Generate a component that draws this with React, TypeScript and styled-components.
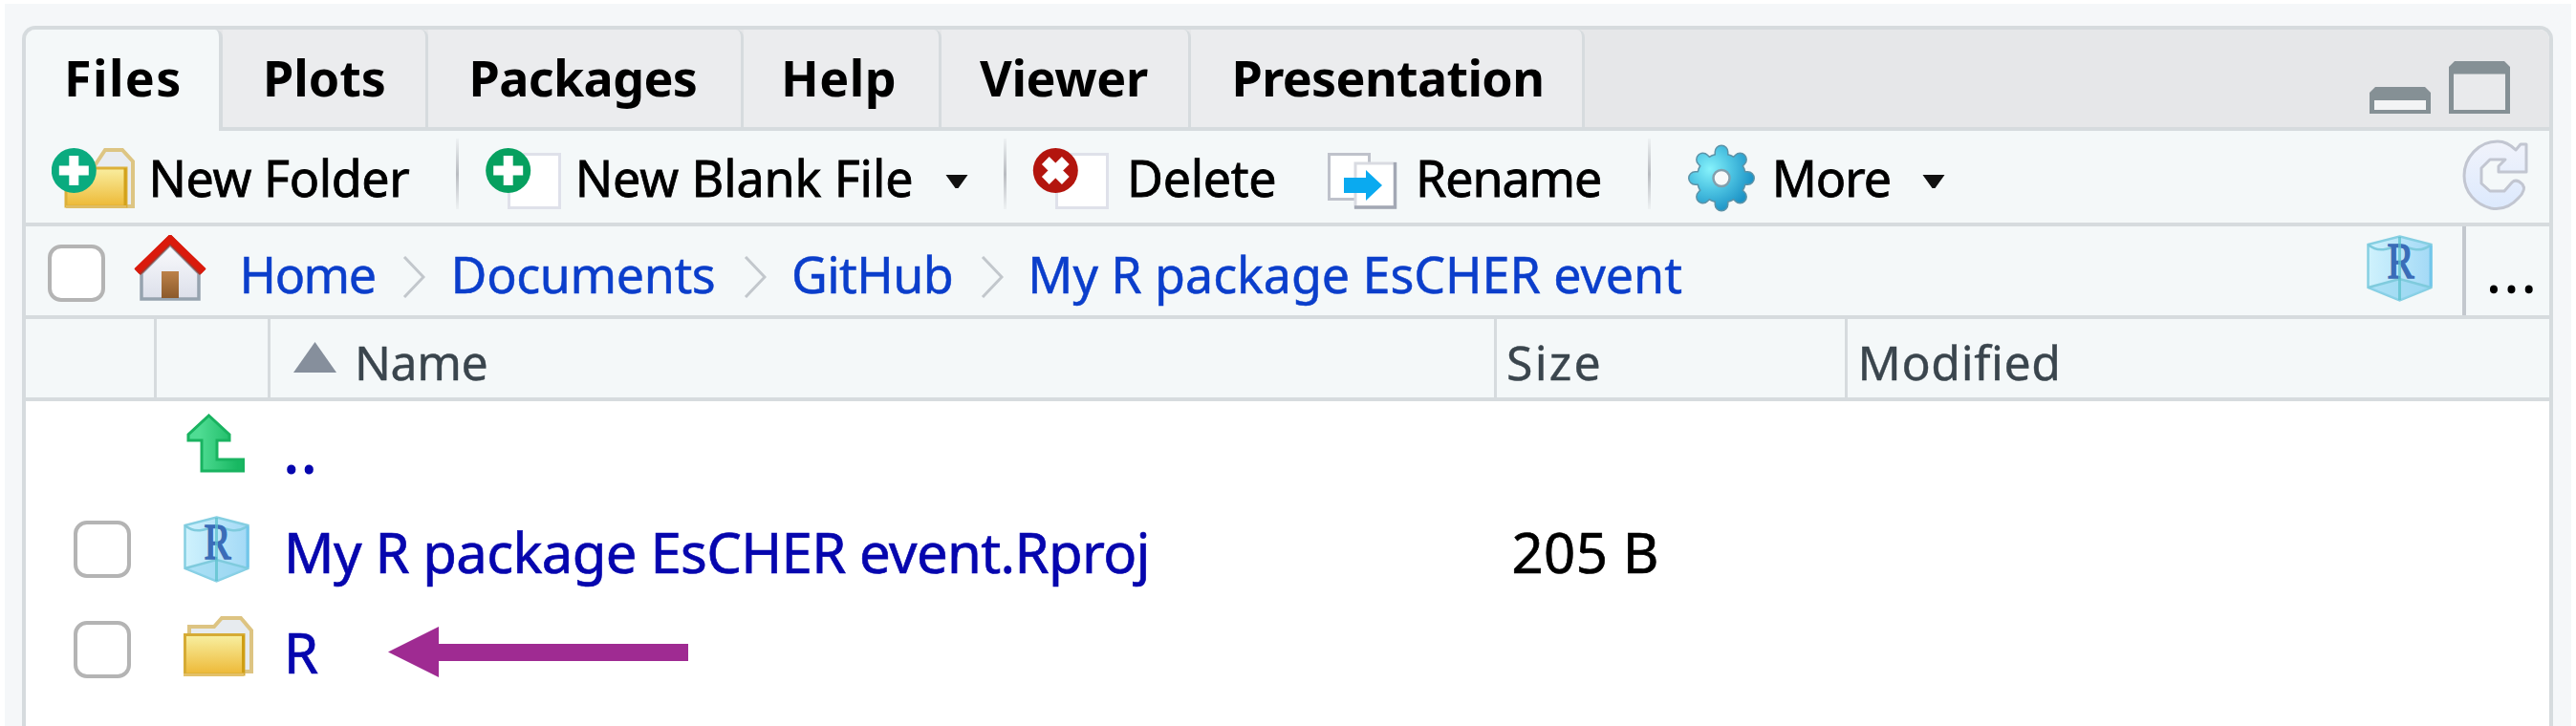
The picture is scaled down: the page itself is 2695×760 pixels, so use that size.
import React from 'react';
import styled, { createGlobalStyle } from 'styled-components';

const colors = {
  frame: '#f5f7f9',
  line: '#d6dbde',
  bar: '#f4f8f9',
  strip: '#e6e7e9',
  tab: '#ebecee',
  link: '#0b3ecb',
  file: '#0606ae',
  heading: '#3a454d',
  steel: '#859095',
};

const GlobalStyle = createGlobalStyle`
  *, *::before, *::after { box-sizing: border-box; }
  body {
    margin: 0;
    background: #fff;
    font-family: "Noto Sans", "Open Sans", sans-serif;
    overflow: hidden;
  }
  svg { display: block; flex: none; }
`;

const Page = styled.main`
  width: 2695px;
  height: 760px;
  padding: 4px 5px 0;
  background: #fff;
`;

const Frame = styled.div`
  height: 756px;
  padding: 23px 19px 0 18px;
  background: ${colors.frame};
`;

const Panel = styled.section`
  height: 733px;
  display: flex;
  flex-direction: column;
  overflow: hidden;
  border: 4px solid ${colors.line};
  border-bottom: 0;
  border-radius: 14px 14px 0 0;
  background: #fff;
`;

const Label = styled.span<{ $track?: number; $width?: number; $gap?: number }>`
  flex: none;
  white-space: pre;
  letter-spacing: ${(p) => p.$track ?? 0}px;
  width: ${(p) => (p.$width ? `${p.$width}px` : 'auto')};
  margin-left: ${(p) => p.$gap ?? 0}px;
`;

/* Tabs */

const TabStrip = styled.div`
  display: flex;
  flex: none;
  height: 106px;
  background: linear-gradient(${colors.line}, ${colors.line}) bottom / 100% 4px no-repeat ${colors.strip};
`;

const Tab = styled.div<{ $width: number; $pad: number; $active?: boolean }>`
  display: flex;
  align-items: center;
  flex: none;
  width: ${(p) => p.$width}px;
  height: ${(p) => (p.$active ? 106 : 102)}px;
  padding: 0 0 ${(p) => (p.$active ? 6 : 2)}px ${(p) => p.$pad}px;
  font-size: 52px;
  line-height: 70px;
  font-weight: 700;
  color: #000;
  background: ${(p) => (p.$active ? colors.bar : colors.tab)};
  border-right: ${(p) => (p.$active ? 4 : 3)}px solid ${colors.line};
  border-top-right-radius: 8px;
`;

const WindowButtons = styled.div`
  display: flex;
  align-items: flex-end;
  gap: 19px;
  margin-left: auto;
  padding: 0 41px 18px 0;
`;

/* Toolbar */

const Toolbar = styled.div`
  display: flex;
  align-items: center;
  flex: none;
  height: 100px;
  background: ${colors.bar};
  border-bottom: 4px solid ${colors.line};
`;

const ToolButton = styled.div<{ $width?: number; $pad: number }>`
  display: flex;
  align-items: center;
  flex: none;
  width: ${(p) => (p.$width ? `${p.$width}px` : 'auto')};
  padding-left: ${(p) => p.$pad}px;
  font-size: 52px;
  line-height: 70px;
  color: #000;
  -webkit-text-stroke: 0.8px #000;

  ${Label} { padding-top: 2px; }
`;

const ToolSeparator = styled.div`
  flex: none;
  width: 3px;
  height: 74px;
  margin-bottom: 6px;
  background: linear-gradient(rgba(185, 188, 193, 0.1), #b9bcc1 50%, rgba(185, 188, 193, 0.1));
`;

const RefreshSlot = styled.div`
  margin: 0 19px 0 auto;
`;

/* Path bar */

const PathBar = styled.nav`
  display: flex;
  align-items: center;
  flex: none;
  height: 97px;
  padding-left: 23px;
  background: ${colors.bar};
  border-bottom: 4px solid ${colors.line};
`;

const Checkbox = styled.span`
  flex: none;
  width: 60px;
  height: 60px;
  border: 4px solid #b4b4b4;
  border-radius: 14px;
  background: #fff;
`;

const PathCheckbox = styled(Checkbox)`
  margin: 5px 29px 0 0;
`;

const Crumb = styled(Label)`
  padding-top: 7px;
  font-size: 52px;
  line-height: 70px;
  color: ${colors.link};
  -webkit-text-stroke: 0.5px ${colors.link};
`;

const ProjectSlot = styled.div`
  margin: 0 31px 5px auto;
`;

const Browse = styled.div`
  display: flex;
  align-items: center;
  width: 91px;
  height: 100%;
  padding: 5px 0 0 22px;
  border-left: 4px solid #c3c8ce;
  font-size: 52px;
  line-height: 70px;
  color: #000;
  -webkit-text-stroke: 1.6px #000;
`;

/* File table */

const columns = '137px 119px 1283px 367px 1fr';

const HeaderRow = styled.div`
  display: grid;
  grid-template-columns: ${columns};
  flex: none;
  height: 86px;
  background: ${colors.bar};
  border-bottom: 4px solid ${colors.line};
`;

const HeaderCell = styled.div<{ $pad?: number }>`
  display: flex;
  align-items: center;
  padding: 7px 0 0 ${(p) => p.$pad ?? 0}px;
  border-right: 3px solid ${colors.line};
  font-size: 50px;
  line-height: 68px;
  color: ${colors.heading};
  -webkit-text-stroke: 0.4px ${colors.heading};
  &:last-child { border-right: 0; }
`;

const FileRow = styled.div`
  display: grid;
  grid-template-columns: ${columns};
  flex: none;
  height: 105px;
  font-size: 58px;
  line-height: 79px;
`;

const FileCell = styled.div<{ $pad?: number; $lift?: number; $color?: string }>`
  display: flex;
  align-items: center;
  padding: 0 0 ${(p) => p.$lift ?? 0}px ${(p) => p.$pad ?? 0}px;
  color: ${(p) => p.$color ?? '#000'};
  -webkit-text-stroke: 0.7px ${(p) => p.$color ?? '#000'};
`;

const ParentLabel = styled(Label)`
  -webkit-text-stroke-width: 2px;
`;

/* Icons */

const Caret = () => (
  <svg width="24" height="15" viewBox="0 0 24 15" style={{ marginTop: 10 }}>
    <path d="M0.500 0H23.500L13.500 14H10.500z" fill="#111" />
  </svg>
);

const Chevron = () => (
  <svg width="24" height="44" viewBox="0 0 24 44" style={{ marginTop: 12 }}>
    <path d="M2 1l20 21L2 43" fill="none" stroke="#c2c7cc" strokeWidth="3" />
  </svg>
);

const AddBadge = ({ x, color }: { x: number; color: string }) => (
  <g transform={`translate(${x} 33.5)`}>
    <circle r="23.5" fill={color} />
    <path d="M0-15.500V15.500M-15.500 0H15.500" stroke="#fff" strokeWidth="10" />
  </g>
);

const NewFolderIcon = () => (
  <svg width="88" height="80" viewBox="0 0 88 80">
    <defs>
      <linearGradient id="folderNew" x2="0" y2="1">
        <stop stopColor="#f9eea0" />
        <stop offset="1" stopColor="#edb936" />
      </linearGradient>
    </defs>
    <path d="M44 30L56 12H74L85 24V71H70" fill="#e9ecf1" stroke="#ddc583" strokeWidth="4" />
    <path d="M15 31H78V71H15z" fill="url(#folderNew)" stroke="#dcb03a" strokeWidth="3" />
    <path d="M15 71.500H78" stroke="#e0bd62" strokeWidth="3" />
    <path d="M77 31V70" stroke="#d3a21b" strokeWidth="3" />
    <AddBadge x={23.3} color="#0aab7f" />
  </svg>
);

const Sheet = () => (
  <path d="M27.500 16.500H80.500V72.500H27.500z" fill="#fff" stroke="#dfe1ea" strokeWidth="3" />
);

const NewFileIcon = () => (
  <svg width="84" height="80" viewBox="0 0 84 80">
    <Sheet />
    <AddBadge x={26.7} color="#06a05f" />
  </svg>
);

const DeleteIcon = () => (
  <svg width="84" height="80" viewBox="0 0 84 80">
    <Sheet />
    <circle cx="26.300" cy="33.500" r="23.500" fill="#b3150e" />
    <path d="M15.800 23l21 21M36.800 23l-21 21" stroke="#fff" strokeWidth="11" />
  </svg>
);

const RenameIcon = () => (
  <svg width="80" height="80" viewBox="0 0 80 80">
    <path d="M5.500 16.500H47.500V63.500H5.500z" fill="#fff" stroke="#bfc2cb" strokeWidth="3" />
    <path d="M33 26H74.500V72H33z" fill="#fff" stroke="#d9dbe2" strokeWidth="3" />
    <path d="M74.500 25V72H32" fill="none" stroke="#a3a8b4" strokeWidth="3.500" />
    <path d="M21 41H44V33L61 49L44 65V57H21z" fill="#0aaaf0" />
  </svg>
);

const gearTeeth = Array.from({ length: 8 }, (_, i) => {
  const angle = (i * Math.PI) / 4;
  return `M38 41.500L${(38 + 27.5 * Math.cos(angle)).toFixed(2)} ${(41.5 + 27.5 * Math.sin(angle)).toFixed(2)}`;
}).join('');

const GearIcon = () => (
  <svg width="76" height="80" viewBox="0 0 76 80">
    <defs>
      <radialGradient id="gearFill" gradientUnits="userSpaceOnUse" cx="26" cy="32" r="46">
        <stop stopColor="#86f2fb" />
        <stop offset="0.5" stopColor="#4cc3e2" />
        <stop offset="1" stopColor="#1d93c6" />
      </radialGradient>
    </defs>
    <g fill="#5b93a8" stroke="#5b93a8" strokeLinecap="round">
      <circle cx="38" cy="41.500" r="26.500" stroke="none" />
      <path d={gearTeeth} strokeWidth="15" />
    </g>
    <circle cx="38" cy="41.500" r="25" fill="url(#gearFill)" />
    <path d={gearTeeth} stroke="url(#gearFill)" strokeWidth="12" strokeLinecap="round" />
    <circle cx="38" cy="41.500" r="8.500" fill="#f8fafa" stroke="#829fac" strokeWidth="2.500" />
  </svg>
);

const RefreshIcon = () => (
  <svg width="75" height="80" viewBox="0 0 75 80">
    <defs>
      <linearGradient id="refreshFill" x2="0" y2="1">
        <stop stopColor="#f1f3fb" />
        <stop offset="1" stopColor="#dce9fd" />
      </linearGradient>
    </defs>
    <path
      d="M59 12L64 6H70V35H41V29L48 22H32L23 31V47L32 55H47L55 46C58 43 62 44 66 48C69 52 68 56 62 62C54 71 44 75 33 73C17 69 5 56 5 39C5 20 20 3 40 3C48 3 54 7 59 12Z"
      fill="url(#refreshFill)"
      stroke="#c2c6d1"
      strokeWidth="3"
      strokeLinejoin="round"
    />
  </svg>
);

const HomeIcon = () => (
  <svg width="78" height="70" viewBox="0 0 78 70" style={{ marginBottom: 5 }}>
    <defs>
      <linearGradient id="doorFill" x2="0" y2="1">
        <stop stopColor="#bc8149" />
        <stop offset="1" stopColor="#8c5a2b" />
      </linearGradient>
      <linearGradient id="wallFill" x2="0" y2="1">
        <stop stopColor="#fafbfd" />
        <stop offset="1" stopColor="#dcdfea" />
      </linearGradient>
    </defs>
    <path d="M9 40L39 10L69 40V67H9z" fill="url(#wallFill)" stroke="#96a3af" strokeWidth="3.500" />
    <path d="M30 38H48V66H30z" fill="url(#doorFill)" />
    <path d="M5 39L39 5L73 39" fill="none" stroke="#a5362b" strokeWidth="8.500" />
    <path d="M4 38L39 4L74 38" fill="none" stroke="#da1a0c" strokeWidth="7.500" />
  </svg>
);

const CubeIcon = () => (
  <svg width="69" height="70" viewBox="0 0 69 70">
    <defs>
      <linearGradient id="cubeFill">
        <stop stopColor="#cff2fd" />
        <stop offset="1" stopColor="#a3d9f6" />
      </linearGradient>
    </defs>
    <path d="M34.500 1.500L67.500 10V55L34.500 68.500L1.500 55V10z" fill="url(#cubeFill)" stroke="#86cfe2" strokeWidth="2.500" />
    <path d="M1.500 55L34.500 46L67.500 55L34.500 68.500z" fill="#8fd3ee" opacity="0.55" />
    <path d="M1.500 10C12 19 22 15 34.500 10C47 15 57 19 67.500 10M1.500 55L34.500 46L67.500 55" fill="none" stroke="#7fcbdd" strokeWidth="2.500" />
    <text x="35.500" y="45" fontFamily="Liberation Serif, serif" fontSize="52" textAnchor="middle" fill="#3a6cb8" stroke="#3a6cb8" strokeWidth="1.600" textLength="28" lengthAdjust="spacingAndGlyphs">R</text>
    <path d="M34.500 2V68" stroke="#5cc2cd" strokeWidth="3" opacity="0.75" />
    <path d="M67 11V54" stroke="#72c6ea" strokeWidth="3" />
  </svg>
);

const UpIcon = () => (
  <svg width="61" height="62" viewBox="0 0 61 62">
    <defs>
      <linearGradient id="upFill">
        <stop offset="0.2" stopColor="#4fdc93" />
        <stop offset="0.9" stopColor="#18b862" />
      </linearGradient>
    </defs>
    <path d="M23.500 2L45 22V28H32V48H59.500V60H16V28H2V22z" fill="url(#upFill)" stroke="#19b360" strokeWidth="3" />
  </svg>
);

const FolderIcon = () => (
  <svg width="74" height="66" viewBox="0 0 74 66">
    <defs>
      <linearGradient id="folderFill" x2="0" y2="1">
        <stop stopColor="#f8f0a2" />
        <stop offset="1" stopColor="#edb836" />
      </linearGradient>
    </defs>
    <path d="M6 22V12H32L40 3H60L71 16V59H60" fill="#e7ebef" stroke="#ddc482" strokeWidth="4" />
    <path d="M1.500 20.500H63V62H1.500z" fill="url(#folderFill)" stroke="#d6ab35" strokeWidth="3" />
    <path d="M0 62.500H63" stroke="#e3c069" strokeWidth="3" />
    <path d="M62.500 21V60" stroke="#cf9e14" strokeWidth="3" />
  </svg>
);

const SortIcon = () => (
  <svg width="45" height="32" viewBox="0 0 45 32" style={{ marginBottom: 10 }}>
    <path d="M22.500 0L45 32H0z" fill="#868f9c" />
  </svg>
);

const PointerArrow = () => (
  <svg width="314" height="53" viewBox="0 0 314 53">
    <path d="M0 26.500L53 0V18H314V36H53V53z" fill="#9f2b92" />
  </svg>
);

const MinimizeIcon = () => (
  <svg width="64" height="28" viewBox="0 0 64 28">
    <path d="M0 28V6L6 0H58L64 6V28z" fill={colors.steel} />
    <path d="M5 14H59V24H5z" fill="#f3f4f5" />
  </svg>
);

const MaximizeIcon = () => (
  <svg width="64" height="55" viewBox="0 0 64 55">
    <path d="M0 55V6L6 0H58L64 6V55z" fill={colors.steel} />
    <path d="M5 13.500H59V51H5z" fill="#e9eaec" />
  </svg>
);

const tabs = [
  { name: 'Files', width: 206, pad: 40, track: 1.4, active: true },
  { name: 'Plots', width: 215, pad: 42, track: 0 },
  { name: 'Packages', width: 330, pad: 42.5, track: -0.6 },
  { name: 'Help', width: 207, pad: 39, track: 0.5 },
  { name: 'Viewer', width: 261, pad: 40, track: -0.4 },
  { name: 'Presentation', width: 412, pad: 42.5, track: -0.65 },
];

const crumbs = [
  { name: 'Home', width: 170.4, gap: 33.6, track: -1.5 },
  { name: 'Documents', width: 306.4, gap: 26.6, track: -0.4 },
  { name: 'GitHub', width: 198, gap: 26, track: -0.6 },
  { name: 'My R package EsCHER event', width: 700, gap: 25.3, track: -0.05 },
];

export default function App() {
  return (
    <>
      <GlobalStyle />
      <Page>
        <Frame>
          <Panel>
            <TabStrip>
              {tabs.map((t) => (
                <Tab key={t.name} $width={t.width} $pad={t.pad} $active={t.active}>
                  <Label $track={t.track}>{t.name}</Label>
                </Tab>
              ))}
              <WindowButtons>
                <MinimizeIcon />
                <MaximizeIcon />
              </WindowButtons>
            </TabStrip>

            <Toolbar>
              <ToolButton $width={450} $pad={27}>
                <NewFolderIcon />
                <Label $gap={13.5} $track={-0.4}>New Folder</Label>
              </ToolButton>
              <ToolSeparator />
              <ToolButton $width={570} $pad={25}>
                <NewFileIcon />
                <Label $gap={12.7} $width={387.3} $track={-0.1}>New Blank File</Label>
                <Caret />
              </ToolButton>
              <ToolSeparator />
              <ToolButton $width={332} $pad={25}>
                <DeleteIcon />
                <Label $gap={17} $track={-0.3}>Delete</Label>
              </ToolButton>
              <ToolButton $width={339} $pad={0}>
                <RenameIcon />
                <Label $gap={16} $track={-1.1}>Rename</Label>
              </ToolButton>
              <ToolSeparator />
              <ToolButton $pad={36}>
                <GearIcon />
                <Label $gap={14.7} $width={157} $track={-1}>More</Label>
                <Caret />
              </ToolButton>
              <RefreshSlot>
                <RefreshIcon />
              </RefreshSlot>
            </Toolbar>

            <PathBar>
              <PathCheckbox />
              <HomeIcon />
              {crumbs.map((c, i) => (
                <React.Fragment key={c.name}>
                  {i > 0 && <Chevron />}
                  <Crumb $width={c.width} $gap={c.gap} $track={c.track}>{c.name}</Crumb>
                </React.Fragment>
              ))}
              <ProjectSlot>
                <CubeIcon />
              </ProjectSlot>
              <Browse>
                <Label $track={4.5}>...</Label>
              </Browse>
            </PathBar>

            <HeaderRow>
              <HeaderCell />
              <HeaderCell />
              <HeaderCell $pad={24}>
                <SortIcon />
                <Label $gap={19} $track={-0.4}>Name</Label>
              </HeaderCell>
              <HeaderCell $pad={10}>
                <Label $track={2.2}>Size</Label>
              </HeaderCell>
              <HeaderCell $pad={10.5}>
                <Label $track={0.6}>Modified</Label>
              </HeaderCell>
            </HeaderRow>

            <FileRow>
              <FileCell />
              <FileCell $pad={31} $lift={17}>
                <UpIcon />
              </FileCell>
              <FileCell $pad={14} $color={colors.file}>
                <ParentLabel $track={3}>..</ParentLabel>
              </FileCell>
            </FileRow>
            <FileRow>
              <FileCell $pad={50} $lift={6}>
                <Checkbox />
              </FileCell>
              <FileCell $pad={28} $lift={6}>
                <CubeIcon />
              </FileCell>
              <FileCell $pad={14} $color={colors.file}>
                <Label $track={-0.62}>My R package EsCHER event.Rproj</Label>
              </FileCell>
              <FileCell $pad={15.5}>
                <Label $track={0.4}>205 B</Label>
              </FileCell>
            </FileRow>
            <FileRow>
              <FileCell $pad={50} $lift={5}>
                <Checkbox />
              </FileCell>
              <FileCell $pad={28} $lift={11}>
                <FolderIcon />
              </FileCell>
              <FileCell $pad={14} $color={colors.file}>
                <Label $width={109}>R</Label>
                <PointerArrow />
              </FileCell>
            </FileRow>
          </Panel>
        </Frame>
      </Page>
    </>
  );
}
